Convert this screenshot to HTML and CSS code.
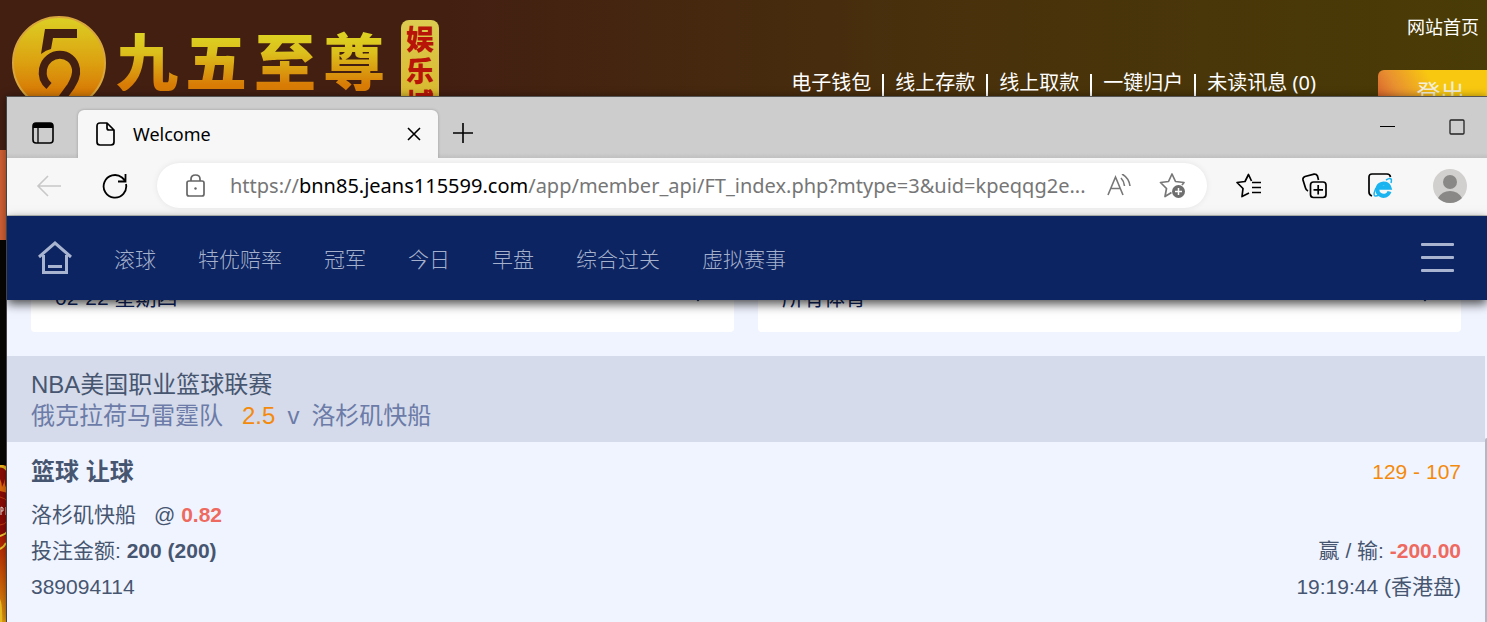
FILE: index.html
```html
<!DOCTYPE html>
<html lang="zh-CN">
<head>
    <meta charset="utf-8">
    <title>Welcome</title>
    <meta name="viewport" content="width=device-width">
    <link rel="stylesheet" href="styles.css">
</head>
<body>

    <!-- casino site -->
    <div class="site">
        <header class="site-header">
            <div class="logo">
                <svg class="logo-mark" width="96" height="96" viewBox="0 0 96 96" aria-hidden="true">
                    <defs>
                        <linearGradient id="gold" x1="0" y1="0" x2="0" y2="1">
                            <stop offset="0" stop-color="#dcd024"/>
                            <stop offset="0.5" stop-color="#dca010"/>
                            <stop offset="0.8" stop-color="#d87c06"/>
                            <stop offset="1" stop-color="#d87c06"/>
                        </linearGradient>
                    </defs>
                    <circle cx="47" cy="47" r="46" fill="url(#gold)" stroke="#d8a63c" stroke-width="2"/>
                    <path fill="#431f12" d="M33 13H65V22H41L39 33Q34 34 29 38Z"/>
                    <path fill="none" stroke="#431f12" stroke-width="8" d="M37 70C31 65 30 59 31 53C35 34 61 34 64 53C65 60 62 65 59 70L43 92"/>
                </svg>
                <span class="logo-name"><b>九</b><b>五</b><b>至</b><b>尊</b></span>
                <span class="logo-tag">娱乐城</span>
            </div>
            <div class="site-right">
                <a class="home-link" href="#">网站首页</a>
                <div class="member">
                    <ul class="member-links">
                        <li><a href="#">电子钱包</a></li>
                        <li><a href="#">线上存款</a></li>
                        <li><a href="#">线上取款</a></li>
                        <li><a href="#">一键归户</a></li>
                        <li><a href="#">未读讯息 (0)</a></li>
                    </ul>
                    <button class="logout" type="button">登出</button>
                </div>
            </div>
        </header>
        <div class="site-banner"></div>
        <div class="site-body">
            <svg width="8" height="160" viewBox="0 0 8 160" aria-hidden="true">
                <defs>
                    <linearGradient id="flame" x1="0" y1="0" x2="0" y2="1">
                        <stop offset="0" stop-color="#b01c04"/>
                        <stop offset="0.5" stop-color="#cc5a08"/>
                        <stop offset="1" stop-color="#e0a010"/>
                    </linearGradient>
                </defs>
                <path fill="#8c0c06" d="M0 0H8V74H0Z"/>
                <path fill="none" stroke="#e8b820" stroke-width="3" d="M0 1Q5 1 8 6"/>
                <path fill="#e06a10" d="M0 26V14Q2 18 2 22Q4 18 5 14Q4 22 8 24V28Z"/>
                <path fill="none" stroke="#c04010" stroke-width="1" d="M0 32Q5 33 8 37M0 60Q5 60 8 55"/>
                <path fill="none" stroke="#e8e0d8" stroke-width="1" d="M1 50V42Q4 42 3 46H1M6 42V50H8"/>
                <path fill="url(#flame)" d="M0 71H8V160H0Z"/>
                <path fill="none" stroke="#f0c830" stroke-width="2" d="M0 71Q5 70 8 66M0 84Q4 82 6 78"/>
                <path fill="#f0c020" d="M0 134Q3 140 2 160H0Z"/>
            </svg>
        </div>
    </div>

    <!-- browser window -->
    <div class="window">
        <div class="tabstrip">
            <button class="icon-btn tab-menu" type="button" aria-label="Tab actions">
                <svg width="22" height="22" viewBox="0 0 22 22"><rect x="1" y="1" width="20" height="20" rx="3" fill="none" stroke="#000" stroke-width="1.6"/><path d="M1 6V4Q1 1 4 1H18Q21 1 21 4V6Z"/><path d="M6 6V21" stroke="#000" stroke-width="1.3"/></svg>
            </button>
            <div class="tab">
                <svg width="20" height="24" viewBox="0 0 20 24" fill="none" stroke="#000" stroke-width="1.7" stroke-linejoin="round"><path d="M11 1H4Q1 1 1 4V20Q1 23 4 23H15Q18 23 18 20V8ZM11 1V6Q11 8 13 8H18"/></svg>
                <span class="tab-title">Welcome</span>
                <button class="icon-btn" type="button" aria-label="Close tab">
                    <svg width="14" height="14" viewBox="0 0 14 14" stroke="#000" stroke-width="1.6"><path d="M1 1L13 13M13 1L1 13"/></svg>
                </button>
            </div>
            <button class="icon-btn new-tab" type="button" aria-label="New tab">
                <svg width="22" height="22" viewBox="0 0 22 22" stroke="#000" stroke-width="1.6"><path d="M11 1V21M1 11H21"/></svg>
            </button>
            <div class="win-buttons">
                <button class="icon-btn" type="button" aria-label="Minimize">
                    <svg width="16" height="16" viewBox="0 0 16 16"><path d="M0 7H15V8H0Z"/></svg>
                </button>
                <button class="icon-btn" type="button" aria-label="Maximize">
                    <svg width="16" height="16" viewBox="0 0 16 16"><rect x="1" y="1" width="14" height="14" rx="1" fill="none" stroke="#222" stroke-width="1.3"/></svg>
                </button>
            </div>
        </div>

        <div class="toolbar">
            <button class="icon-btn" type="button" aria-label="Back">
                <svg width="26" height="22" viewBox="0 0 26 22" fill="none" stroke="#c8c8c8" stroke-width="1.6"><path d="M25 11H2M12 1L2 11L12 21"/></svg>
            </button>
            <button class="icon-btn reload" type="button" aria-label="Refresh">
                <svg width="26" height="26" viewBox="0 0 26 26" fill="none" stroke="#000" stroke-width="1.8"><path d="M24 11A11.3 11.3 0 1 1 20 4.500L23 7.500M23.500 1V8.500H16"/></svg>
            </button>
            <div class="address">
                <svg class="lock" width="20" height="24" viewBox="0 0 20 24" fill="none" stroke="#666" stroke-width="1.7"><rect x="1" y="7" width="17" height="15" rx="2"/><path d="M5 7V5Q5 1 9.500 1Q14 1 14 5V7"/><circle cx="9.500" cy="14.500" r="1.200" fill="#666" stroke="none"/></svg>
                <div class="url" role="textbox" aria-label="Address" contenteditable="true" spellcheck="false">https://<span class="host">bnn85.jeans115599.com</span>/app/member_api/FT_index.php?mtype=3&amp;uid=kpeqqg2e...</div>
                <button class="icon-btn" type="button" aria-label="Read aloud">
                    <svg width="24" height="24" viewBox="0 0 24 24" fill="none" stroke="#777" stroke-width="1.600"><path d="M1 21L8.500 3L16 21M4 14.500H13"/><path d="M14 4Q17 7 17.500 12M15 0Q22 4 23 12"/></svg>
                </button>
                <button class="icon-btn add-fav" type="button" aria-label="Add to favorites">
                    <svg width="28" height="26" viewBox="0 0 28 26"><path fill="none" stroke="#777" stroke-width="1.700" stroke-linejoin="round" d="M12.500 19.500L6 23.500L7.500 15.500L1.500 9.500L9.500 8.500L13 1L16.500 8.500L25 9.500L23 12"/><circle cx="19.500" cy="18.500" r="6.500" fill="#6e6e6e"/><path stroke="#fff" stroke-width="1.500" d="M16 18.500H23M19.500 15V22"/></svg>
                </button>
            </div>
            <div class="actions">
                <button class="icon-btn" type="button" aria-label="Favorites">
                    <svg width="26" height="26" viewBox="0 0 26 26" fill="none" stroke="#000" stroke-width="1.700" stroke-linejoin="round"><path d="M14 20L7 23.500L8 15.500L2 9.500L10 8.500L13.500 1.500L16.500 8"/><path d="M17 9.500H26M17 14.500H26M17 19.500H26"/></svg>
                </button>
                <button class="icon-btn" type="button" aria-label="Collections">
                    <svg width="26" height="26" viewBox="0 0 26 26" fill="none" stroke="#000" stroke-width="1.700"><path d="M7 18Q5 17 4.500 15L2 7Q1.500 4.500 4 3.500L13 1.200Q15.500 1 16.500 3L17.500 7"/><rect x="9.500" y="9" width="15.500" height="15.500" rx="3"/><path d="M17.200 12V21.500M12.500 16.800H22"/></svg>
                </button>
                <button class="icon-btn" type="button" aria-label="Internet Explorer mode">
                    <svg width="26" height="26" viewBox="0 0 26 26" fill="none"><path stroke="#000" stroke-width="1.700" d="M5 23Q2 22 2 19V4Q2 1 5 1H20Q23 1 23.500 4"/><path stroke="#1ab4f0" stroke-width="4" d="M22.500 18.500A6.200 6.200 0 1 1 22.500 14.800H11"/><path stroke="#1ab4f0" stroke-width="1.500" d="M19 7Q26 3 24 10M9 15Q4 26 12 22"/></svg>
                </button>
                <button class="icon-btn" type="button" aria-label="Profile">
                    <svg width="34" height="34" viewBox="0 0 34 34"><circle cx="17" cy="17" r="17" fill="#d2d0ce"/><circle cx="17" cy="13" r="7" fill="#8a8886"/><path fill="#8a8886" d="M5 29Q9 22 17 22T29 29Q24 34 17 34T5 29Z"/></svg>
                </button>
            </div>
        </div>

        <nav class="nav">
            <a class="home" href="#" aria-label="Home">
                <svg width="36" height="34" viewBox="0 0 36 34" fill="none" stroke="#a9b4d0" stroke-width="3"><path d="M2 16L18 2L34 16M6.500 14V31.500H29.500V14M11 25.500H25"/></svg>
            </a>
            <a href="#">滚球</a>
            <a href="#">特优赔率</a>
            <a href="#">冠军</a>
            <a href="#">今日</a>
            <a href="#">早盘</a>
            <a href="#">综合过关</a>
            <a href="#">虚拟赛事</a>
            <button class="icon-btn menu" type="button" aria-label="Menu">
                <svg width="34" height="30" viewBox="0 0 34 30" fill="#a9b4d0"><rect y="0" width="33" height="3" rx="1"/><rect y="13" width="33" height="3" rx="1"/><rect y="26" width="33" height="3" rx="1"/></svg>
            </button>
        </nav>

        <div class="page">
            <main class="content">
                <div class="filters">
                    <div class="filter">
                        <select aria-label="日期"><option>02-22 星期四</option></select>
                        <svg width="14" height="9" viewBox="0 0 14 9" fill="none" stroke="#0c2461" stroke-width="2"><path d="M1 1L7 7L13 1"/></svg>
                    </div>
                    <div class="filter">
                        <select aria-label="体育"><option>所有体育</option></select>
                        <svg width="14" height="9" viewBox="0 0 14 9" fill="none" stroke="#0c2461" stroke-width="2"><path d="M1 1L7 7L13 1"/></svg>
                    </div>
                </div>

                <section class="league">
                    <div>NBA美国职业篮球联赛</div>
                    <div class="teams">
                        <span>俄克拉荷马雷霆队</span>
                        <span class="handicap">2.5</span>
                        <span class="versus">v</span>
                        <span>洛杉矶快船</span>
                    </div>
                </section>

                <section class="bet">
                    <div class="row bet-head">
                        <b>篮球 让球</b>
                        <span class="score">129 - 107</span>
                    </div>
                    <div class="row"><span><span class="pick">洛杉矶快船</span>@ <b class="red">0.82</b></span></div>
                    <div class="row">
                        <span>投注金额: <b>200 (200)</b></span>
                        <span>赢 / 输: <b class="red">-200.00</b></span>
                    </div>
                    <div class="row">
                        <span>389094114</span>
                        <span>19:19:44 (香港盘)</span>
                    </div>
                </section>
            </main>
            <div class="scrollbar"></div>
        </div>
    </div>

</body>
</html>
```

FILE: styles.css
```css
* { box-sizing: border-box; }
body {
    margin: 0;
    height: 100vh;
    overflow: hidden;
    position: relative;
    background: #080604;
    font-family: "Liberation Sans", "Noto Sans CJK SC", sans-serif;
}
a { color: inherit; text-decoration: none; }
svg { display: block; }
button { font-family: inherit; }
.icon-btn {
    padding: 0;
    border: 0;
    background: none;
}

/* site behind */
.site-header {
    display: flex;
    justify-content: space-between;
    height: 150px;
    background: linear-gradient(90deg, #431f12 0%, #431f12 30%, #48300c 62%, #4a3c06 100%);
    color: #fff;
    font-family: "Noto Sans", "Noto Sans CJK SC", sans-serif;
}
.logo {
    display: flex;
    align-items: flex-start;
    padding: 16px 0 0 12px;
}
.logo-name {
    display: flex;
    gap: 7px;
    margin-left: 8px;
    padding-top: 11px;
    font-family: "Noto Sans CJK SC", sans-serif;
    font-size: 62px;
    line-height: 64px;
}
.logo-name b {
    font-weight: 900;
    color: transparent;
    background: linear-gradient(#dcd824, #dcc01c 40%, #d87c06 90%);
    -webkit-background-clip: text;
    background-clip: text;
}
.logo-tag {
    width: 38px;
    height: 110px;
    margin: 4px 0 0 16px;
    padding: 2px 5px;
    border-radius: 8px;
    background: linear-gradient(#dccc50, #d8b020);
    color: #b81408;
    font-family: "Noto Sans CJK SC", sans-serif;
    font-size: 28px;
    font-weight: 900;
    line-height: 32px;
}
.site-right {
    display: flex;
    flex-direction: column;
    align-items: flex-end;
}
.home-link {
    margin: 15px 8px 0 0;
    font-size: 18px;
    line-height: 24px;
}
.member {
    display: flex;
    margin-top: 31px;
}
.member-links {
    display: flex;
    margin: 0;
    padding: 0;
    list-style: none;
    font-size: 20px;
    line-height: 26px;
}
.member-links li + li::before {
    content: "";
    display: inline-block;
    width: 2px;
    height: 22px;
    margin: 0 11px;
    background: #fff;
    vertical-align: middle;
}
.logout {
    width: 109px;
    height: 46px;
    margin-left: 62px;
    padding: 0 0 0 16px;
    border: 0;
    border-radius: 6px 0 0 6px;
    background: linear-gradient(60deg, #d0502c, #e89030 25%, #f8c810 55%);
    color: #f4f0dc;
    font-size: 24px;
    line-height: 30px;
}
.site-banner {
    height: 90px;
    background: #d06034;
}
.site-body { padding-top: 225px; }

/* browser window */
.window {
    position: absolute;
    top: 96px;
    right: 0;
    bottom: 0;
    left: 6px;
    display: flex;
    flex-direction: column;
    overflow: hidden;
    border-top: 1px solid #555;
    border-left: 1px solid #444;
    background: #f0f4ff;
    box-shadow: 0 0 8px rgba(0, 0, 0, .4);
}
.tabstrip {
    display: flex;
    align-items: center;
    height: 61px;
    flex: none;
    padding-left: 25px;
    background: linear-gradient(#cdcdcd 56px, #c0c0c0);
}
.tab-menu { padding-top: 11px; }
.tab {
    position: relative;
    display: flex;
    align-items: center;
    align-self: flex-end;
    width: 360px;
    height: 48px;
    margin-left: 24px;
    padding: 0 17px 0 18px;
    border-radius: 6px 6px 0 0;
    background: #f7f7f7;
    box-shadow: 0 0 3px rgba(0, 0, 0, .25);
    font-family: "Noto Sans", sans-serif;
    font-size: 18px;
}
.tab-title {
    flex: 1;
    margin-left: 17px;
}
.new-tab {
    margin-left: 14px;
    padding-top: 11px;
}
.win-buttons {
    display: flex;
    gap: 53px;
    margin-left: auto;
    padding: 0 22px 1px 0;
}
.toolbar {
    display: flex;
    align-items: center;
    flex: none;
    height: 58px;
    padding: 0 20px 2px 29px;
    border-bottom: 1px solid #c0c4c0;
    background: #f7f7f7;
    position: relative;
}
.reload { margin-left: 40px; }
.address {
    display: flex;
    align-items: center;
    flex: 1;
    min-width: 0;
    height: 45px;
    margin-left: 29px;
    padding: 0 20px 0 29px;
    border-radius: 23px;
    background: #fff;
    box-shadow: 0 0 6px rgba(0, 0, 0, .08);
}
.lock { flex: none; }
.url {
    flex: 1;
    min-width: 0;
    margin: 0 16px 0 24px;
    overflow: hidden;
    white-space: nowrap;
    color: #767676;
    font-family: "Noto Sans", sans-serif;
    font-size: 20px;
    line-height: 30px;
}
.host { color: #000; }
.add-fav { margin-left: 28px; }
.actions {
    display: flex;
    align-items: center;
    gap: 40px;
    margin-left: 28px;
}

/* betting page */
.nav {
    position: relative;
    z-index: 1;
    display: flex;
    align-items: center;
    gap: 42px;
    flex: none;
    height: 84px;
    padding: 0 32px 0 30px;
    background: #0c2461;
    box-shadow: 0 4px 10px rgba(0, 0, 0, .7);
    color: #a4b0cc;
    font-family: "Liberation Sans", "Noto Sans CJK SC", sans-serif;
    font-size: 21px;
    font-weight: 300;
}
.home { margin-right: -1px; }
.menu { margin-left: auto; }
.page {
    display: flex;
    flex: 1;
    color: #475670;
    font-size: 21px;
}
.content { flex: 1; }
.filters {
    display: grid;
    grid-template-columns: 1fr 1fr;
    gap: 24px;
    margin-top: -52px;
    padding: 0 24px;
}
.filter {
    display: grid;
    align-items: center;
    height: 84px;
    border-radius: 4px;
    background: #fff;
}
.filter select,
.filter svg { grid-area: 1 / 1; }
.filter svg {
    justify-self: end;
    margin: 14px 29px 0 0;
}
.filter select {
    height: 84px;
    padding: 14px 24px 0;
    border: 0;
    background: none;
    appearance: none;
    color: #0c2461;
    font: inherit;
}
.league {
    margin-top: 24px;
    padding: 13px 24px 11px;
    background: #d5dbea;
    font-size: 24px;
    line-height: 31px;
}
.teams {
    display: flex;
    gap: 12px;
    color: #6c7ba8;
}
.handicap {
    margin-left: 7px;
    color: #f48a0c;
}
.bet {
    padding: 12px 24px;
    line-height: 36px;
}
.row {
    display: flex;
    justify-content: space-between;
}
.bet-head { margin-bottom: 7px; }
.bet-head b { font-size: 24px; }
.pick { margin-right: 18px; }
.score { color: #f48a0c; }
.red { color: #ee6a60; }
.scrollbar {
    width: 2px;
    margin-top: 138px;
    border-radius: 2px 0 0 0;
    background: #b4b8c4;
}
```
